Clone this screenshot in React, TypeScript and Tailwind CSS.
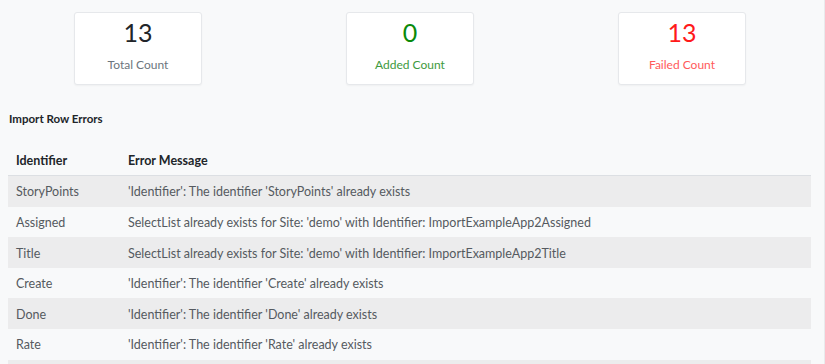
import React from "react";

const rows: [string, string][] = [
  ["StoryPoints", "'Identifier': The identifier 'StoryPoints' already exists"],
  ["Assigned", "SelectList already exists for Site: 'demo' with Identifier: ImportExampleApp2Assigned"],
  ["Title", "SelectList already exists for Site: 'demo' with Identifier: ImportExampleApp2Title"],
  ["Create", "'Identifier': The identifier 'Create' already exists"],
  ["Done", "'Identifier': The identifier 'Done' already exists"],
  ["Rate", "'Identifier': The identifier 'Rate' already exists"],
];

function Card({ value, label, valueCls, labelCls }: { value: string; label: string; valueCls: string; labelCls: string }) {
  return (
    <div className="flex justify-center">
      <div className="w-[128px] h-[73px] bg-white border border-[#e6e8eb] rounded-[3px] shadow-[0_1px_2px_rgba(0,0,0,0.04)] flex flex-col items-center pt-[4px]">
        <div className={`text-[25px] leading-[30px] ${valueCls}`}>{value}</div>
        <div className={`mt-[10px] text-[12px] leading-[16px] ${labelCls}`}>{label}</div>
      </div>
    </div>
  );
}

export default function App() {
  return (
    <div
      className="w-[825px] h-[364px] overflow-hidden bg-[#f8f9fa] border-r border-[#e9eaec]"
      style={{ fontFamily: "Lato, 'Noto Sans', sans-serif" }}
    >
      <div className="ml-[2px] w-[816px] pt-[12px] grid grid-cols-3">
        <Card value="13" label="Total Count" valueCls="text-[#212529]" labelCls="text-[#6c757d]" />
        <Card value="0" label="Added Count" valueCls="text-[#0a8a0a]" labelCls="text-[#3d9a3d]" />
        <Card value="13" label="Failed Count" valueCls="text-[#ff1a1a]" labelCls="text-[#ff5a5a]" />
      </div>
      <div className="ml-[9px] mt-[26px] text-[11.5px] font-bold text-[#212529] leading-[16px]">Import Row Errors</div>
      <div className="ml-[8px] w-[803px] mt-[18px] text-[12.5px]">
        <div className="flex h-[31px] items-center pt-[3px] font-bold text-[#212529] border-b-[1.5px] border-[#dcdfe3]">
          <div className="w-[120px] pl-[8px]">Identifier</div>
          <div>Error Message</div>
        </div>
        {rows.map(([id, msg], i) => (
          <div
            key={id}
            className={`flex h-[30.6px] items-center pt-[3px] text-[#555a60] ${i % 2 === 0 ? "bg-[#ececed]" : "bg-[#f8f9fa]"}`}
          >
            <div className="w-[120px] pl-[8px]">{id}</div>
            <div>{msg}</div>
          </div>
        ))}
        <div className="h-[30.6px] bg-[#ececed]" />
      </div>
    </div>
  );
}
